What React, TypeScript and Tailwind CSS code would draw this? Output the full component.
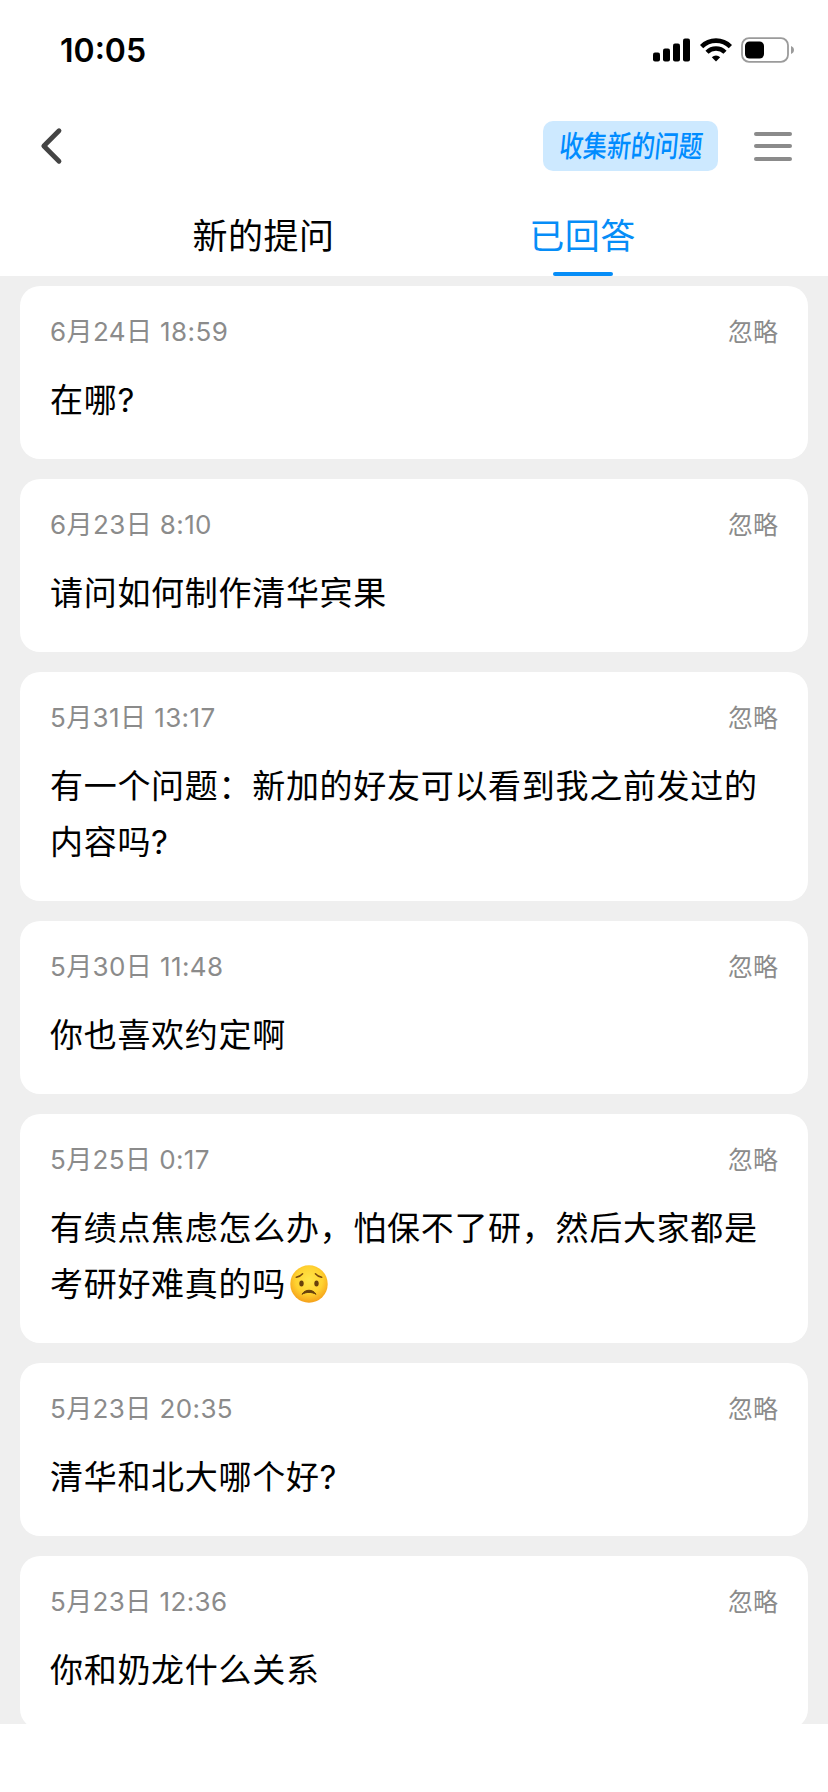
import { useState } from "react";

type Question = {
  id: number;
  time: string;
  lines: string[];
  worried?: boolean;
};

const QUESTIONS: Question[] = [
  { id: 1, time: "6月24日 18:59", lines: ["在哪?"] },
  { id: 2, time: "6月23日 8:10", lines: ["请问如何制作清华宾果"] },
  { id: 3, time: "5月31日 13:17", lines: ["有一个问题：新加的好友可以看到我之前发过的", "内容吗?"] },
  { id: 4, time: "5月30日 11:48", lines: ["你也喜欢约定啊"] },
  { id: 5, time: "5月25日 0:17", lines: ["有绩点焦虑怎么办，怕保不了研，然后大家都是", "考研好难真的吗"], worried: true },
  { id: 6, time: "5月23日 20:35", lines: ["清华和北大哪个好?"] },
  { id: 7, time: "5月23日 12:36", lines: ["你和奶龙什么关系"] },
];

type Tab = "new" | "answered";

export default function App() {
  const [tab, setTab] = useState<Tab>("answered");

  return (
    <div className="flex h-[1792px] w-[828px] flex-col overflow-hidden bg-white font-['Inter','Noto_Sans_CJK_SC',sans-serif] text-black">
      <StatusBar />
      <NavBar />
      <div className="flex h-[80px] shrink-0 pr-[86px] pl-[104px]">
        <TabButton active={tab === "new"} onClick={() => setTab("new")}>
          新的提问
        </TabButton>
        <TabButton active={tab === "answered"} onClick={() => setTab("answered")}>
          已回答
        </TabButton>
      </div>
      <ul className="flex h-[1448px] shrink-0 flex-col gap-5 overflow-hidden bg-[#efefef] px-5 pt-2.5">
        {QUESTIONS.map((q) => (
          <QuestionCard key={q.id} q={q} />
        ))}
      </ul>
    </div>
  );
}

function StatusBar() {
  return (
    <div className="flex h-[96px] shrink-0 items-center justify-between pt-[3px] pr-[34px] pl-[60px]">
      <span className="pt-0.5 text-[32px] leading-none font-semibold">10:05</span>
      <div className="flex items-center">
        <svg width="37" height="24" viewBox="0 0 37 24" className="mr-[10px]">
          <rect x="0" y="14.5" width="7" height="9" rx="2" />
          <rect x="10" y="10.5" width="7" height="13" rx="2" />
          <rect x="20" y="5.5" width="7" height="18" rx="2" />
          <rect x="30" y="0.5" width="7" height="23" rx="2" />
        </svg>
        <svg width="32" height="24" viewBox="0 0 32 24" className="mr-[9px]">
          <path d="M1.6 8.6a20.4 20.4 0 0 1 28.8 0" fill="none" stroke="#000" strokeWidth="4.6" />
          <path d="M7 14.2a12.7 12.7 0 0 1 18 0" fill="none" stroke="#000" strokeWidth="4.4" />
          <path d="M11.8 19.2a6 6 0 0 1 8.4 0L16 23.6z" />
        </svg>
        <svg width="53" height="26" viewBox="0 0 53 26">
          <rect x="1" y="1.2" width="46" height="23.6" rx="7" fill="none" stroke="#9b9b9b" strokeWidth="1.8" />
          <rect x="4" y="4.5" width="19" height="17" rx="4.5" />
          <path d="M50 9v8c1.8-.7 3-2.2 3-4s-1.2-3.3-3-4z" fill="#9b9b9b" />
        </svg>
      </div>
    </div>
  );
}

function NavBar() {
  return (
    <div className="flex h-[100px] shrink-0 items-center pr-[36px] pl-[40px]">
      <button aria-label="返回">
        <svg width="24" height="38" viewBox="0 0 24 38" className="block">
          <path d="M19 3.8L3.8 19 19 34.2" fill="none" stroke="#444" strokeWidth="4.8" strokeLinecap="round" strokeLinejoin="round" />
        </svg>
      </button>
      <button className="ml-auto flex h-[50px] w-[175px] items-center justify-center rounded-[10px] bg-[#cde9ff]">
        <span className="inline-block -skew-x-[7deg] scale-x-[0.795] text-[30px] font-medium whitespace-nowrap text-[#008cff]">
          收集新的问题
        </span>
      </button>
      <button aria-label="菜单" className="ml-[36px] flex w-[38px] flex-col gap-[8.5px]">
        <span className="h-1 rounded-full bg-[#8b8b8b]" />
        <span className="h-1 rounded-full bg-[#8b8b8b]" />
        <span className="h-1 rounded-full bg-[#8b8b8b]" />
      </button>
    </div>
  );
}

function TabButton({ active, onClick, children }: { active: boolean; onClick: () => void; children: React.ReactNode }) {
  return (
    <button
      onClick={onClick}
      className={`flex flex-1 flex-col items-center justify-between pt-[14px] text-[35px] leading-[52px] tracking-[0.5px] ${
        active ? "text-[#068df7]" : "text-black"
      }`}
    >
      {children}
      <span className={`h-1 w-[60px] rounded-full ${active ? "bg-[#068df7]" : "bg-transparent"}`} />
    </button>
  );
}

function QuestionCard({ q }: { q: Question }) {
  return (
    <li className="shrink-0 rounded-[20px] bg-white px-[30px] pt-[26px] pb-[31px]">
      <div className="flex h-[40px] items-center justify-between leading-[40px] text-[#8b8b8b]">
        <span className="text-[26px] tracking-[0.4px]">{q.time}</span>
        <button className="text-[25px]">忽略</button>
      </div>
      <div className="pt-5 text-[33px] leading-[56px] tracking-[0.7px] whitespace-nowrap">
        {q.lines.map((line, i) => (
          <p key={line} className="flex items-center">
            {line}
            {q.worried && i === q.lines.length - 1 && <WorriedFace />}
          </p>
        ))}
      </div>
    </li>
  );
}

function WorriedFace() {
  return (
    <svg width="38" height="38" viewBox="0 0 38 38" className="ml-[4px]" role="img" aria-label="😟">
      <defs>
        <radialGradient id="face" cx="0.5" cy="0.4" r="0.6">
          <stop offset="0" stopColor="#ffe64a" />
          <stop offset="0.6" stopColor="#ffd230" />
          <stop offset="1" stopColor="#f5a01a" />
        </radialGradient>
      </defs>
      <circle cx="19" cy="19" r="18.7" fill="url(#face)" />
      <ellipse cx="11.5" cy="18.5" rx="2.2" ry="3" fill="#68400c" />
      <ellipse cx="26.5" cy="18.5" rx="2.2" ry="3" fill="#68400c" />
      <path d="M6.3 12.3c2.4-.4 4.7-1.6 6.3-3.5M31.7 12.3c-2.4-.4-4.7-1.6-6.3-3.5" fill="none" stroke="#7a4a0c" strokeWidth="1.5" strokeLinecap="round" />
      <path d="M12 29.3c3-5.4 11-5.4 14 0-3.9-2.5-10.1-2.5-14 0z" fill="#68400c" stroke="#68400c" strokeWidth="1" strokeLinejoin="round" />
    </svg>
  );
}
